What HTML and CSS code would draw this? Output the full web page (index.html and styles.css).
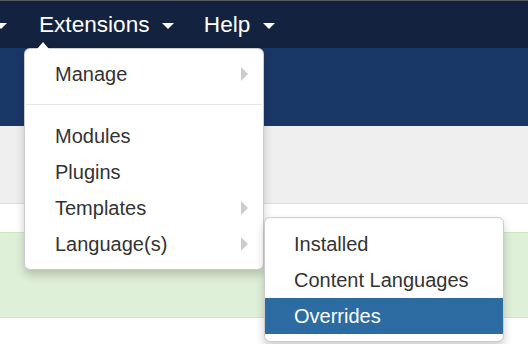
FILE: index.html
```html
<!DOCTYPE html>
<html lang="en">
<head>
    <meta charset="UTF-8">
    <meta name="viewport" content="width=device-width, initial-scale=1.0">
    <title>Extensions - Administration</title>
    <link rel="stylesheet" href="styles.css">
</head>
<body>
    <div class="navbar">
        <ul class="nav">
            <li class="nav-item nav-cut"><span class="caret"></span></li>
            <li class="nav-item open">
                Extensions <span class="caret"></span>
                <ul class="dropdown-menu">
                    <li><a href="#">Manage <span class="sub-arrow"></span></a></li>
                    <li class="divider"></li>
                    <li><a href="#">Modules</a></li>
                    <li><a href="#">Plugins</a></li>
                    <li><a href="#">Templates <span class="sub-arrow"></span></a></li>
                    <li class="dropdown-submenu">
                        <a href="#">Language(s) <span class="sub-arrow"></span></a>
                        <ul class="dropdown-menu submenu">
                            <li><a href="#">Installed</a></li>
                            <li><a href="#">Content Languages</a></li>
                            <li class="active"><a href="#">Overrides</a></li>
                        </ul>
                    </li>
                </ul>
            </li>
            <li class="nav-item">Help <span class="caret"></span></li>
        </ul>
    </div>

    <div class="header"></div>
    <div class="subhead"></div>

    <div class="content">
        <div class="alert-success"></div>
    </div>
</body>
</html>
```

FILE: styles.css
```css
html {
    min-height: 100%;
}
body {
    margin: 0;
    min-height: 344px;
    font-family: "Liberation Sans", Arial, sans-serif;
    background-color: #fff;
    overflow-x: hidden;
}
ul {
    list-style: none;
    margin: 0;
    padding: 0;
}
a {
    text-decoration: none;
}
.navbar {
    height: 47px;
    background-color: #13223e;
    border-top: 1px solid #55595f;
}
.nav {
    display: flex;
    margin-left: -5px;
}
.nav-item {
    position: relative;
    padding: 0 15px;
    line-height: 47px;
    font-size: 22.6px;
    color: #fff;
}
.nav-cut {
    padding: 0 17px 0 0;
}
.caret {
    display: inline-block;
    width: 0;
    height: 0;
    margin-left: 6px;
    vertical-align: middle;
    border-top: 6px solid #fff;
    border-left: 6px solid transparent;
    border-right: 6px solid transparent;
}
.nav-cut .caret {
    margin-left: 0;
}
.header {
    height: 78px;
    background-color: #1a3867;
}
.subhead {
    height: 77px;
    background-color: #efefef;
    border-bottom: 1px solid #dddddd;
}
.content {
    padding: 28px 0 30px;
}
.alert-success {
    height: 84px;
    background-color: #dff0d8;
    border-top: 1px solid #d0e6c3;
    border-bottom: 1px solid #d0e6c3;
}

/* dropdowns */
.dropdown-menu {
    position: absolute;
    top: 47px;
    left: 0;
    z-index: 10;
    width: 238px;
    padding: 7px 0;
    background-color: #fff;
    border: 1px solid rgba(0,0,0,0.2);
    border-radius: 6px;
    box-shadow: 0 5px 10px rgba(0,0,0,0.2);
    line-height: 36px;
    font-size: 20px;
}
.nav-item > .dropdown-menu::before,
.nav-item > .dropdown-menu::after {
    content: "";
    position: absolute;
    border-left: 7px solid transparent;
    border-right: 7px solid transparent;
}
.nav-item > .dropdown-menu::before {
    top: -8px;
    left: 11px;
    border-bottom: 7px solid rgba(0,0,0,0.2);
}
.nav-item > .dropdown-menu::after {
    top: -7px;
    left: 12px;
    border-left-width: 6px;
    border-right-width: 6px;
    border-bottom: 7px solid #fff;
}
.dropdown-menu li {
    position: relative;
}
.dropdown-menu a {
    display: flex;
    justify-content: space-between;
    align-items: center;
    padding: 0 15px 0 30px;
    color: #333;
}
.dropdown-menu .divider {
    height: 1px;
    margin: 12px 1px 13px;
    background-color: #e5e5e5;
}
.sub-arrow {
    width: 0;
    height: 0;
    border-top: 7px solid transparent;
    border-bottom: 7px solid transparent;
    border-left: 7px solid #cccccc;
}
.submenu {
    top: -9px;
    left: 239px;
    padding: 8px 0 7px;
}
.submenu a {
    padding-left: 29px;
}
.submenu .active a {
    background-color: #2d6ca2;
    color: #fff;
}
```
